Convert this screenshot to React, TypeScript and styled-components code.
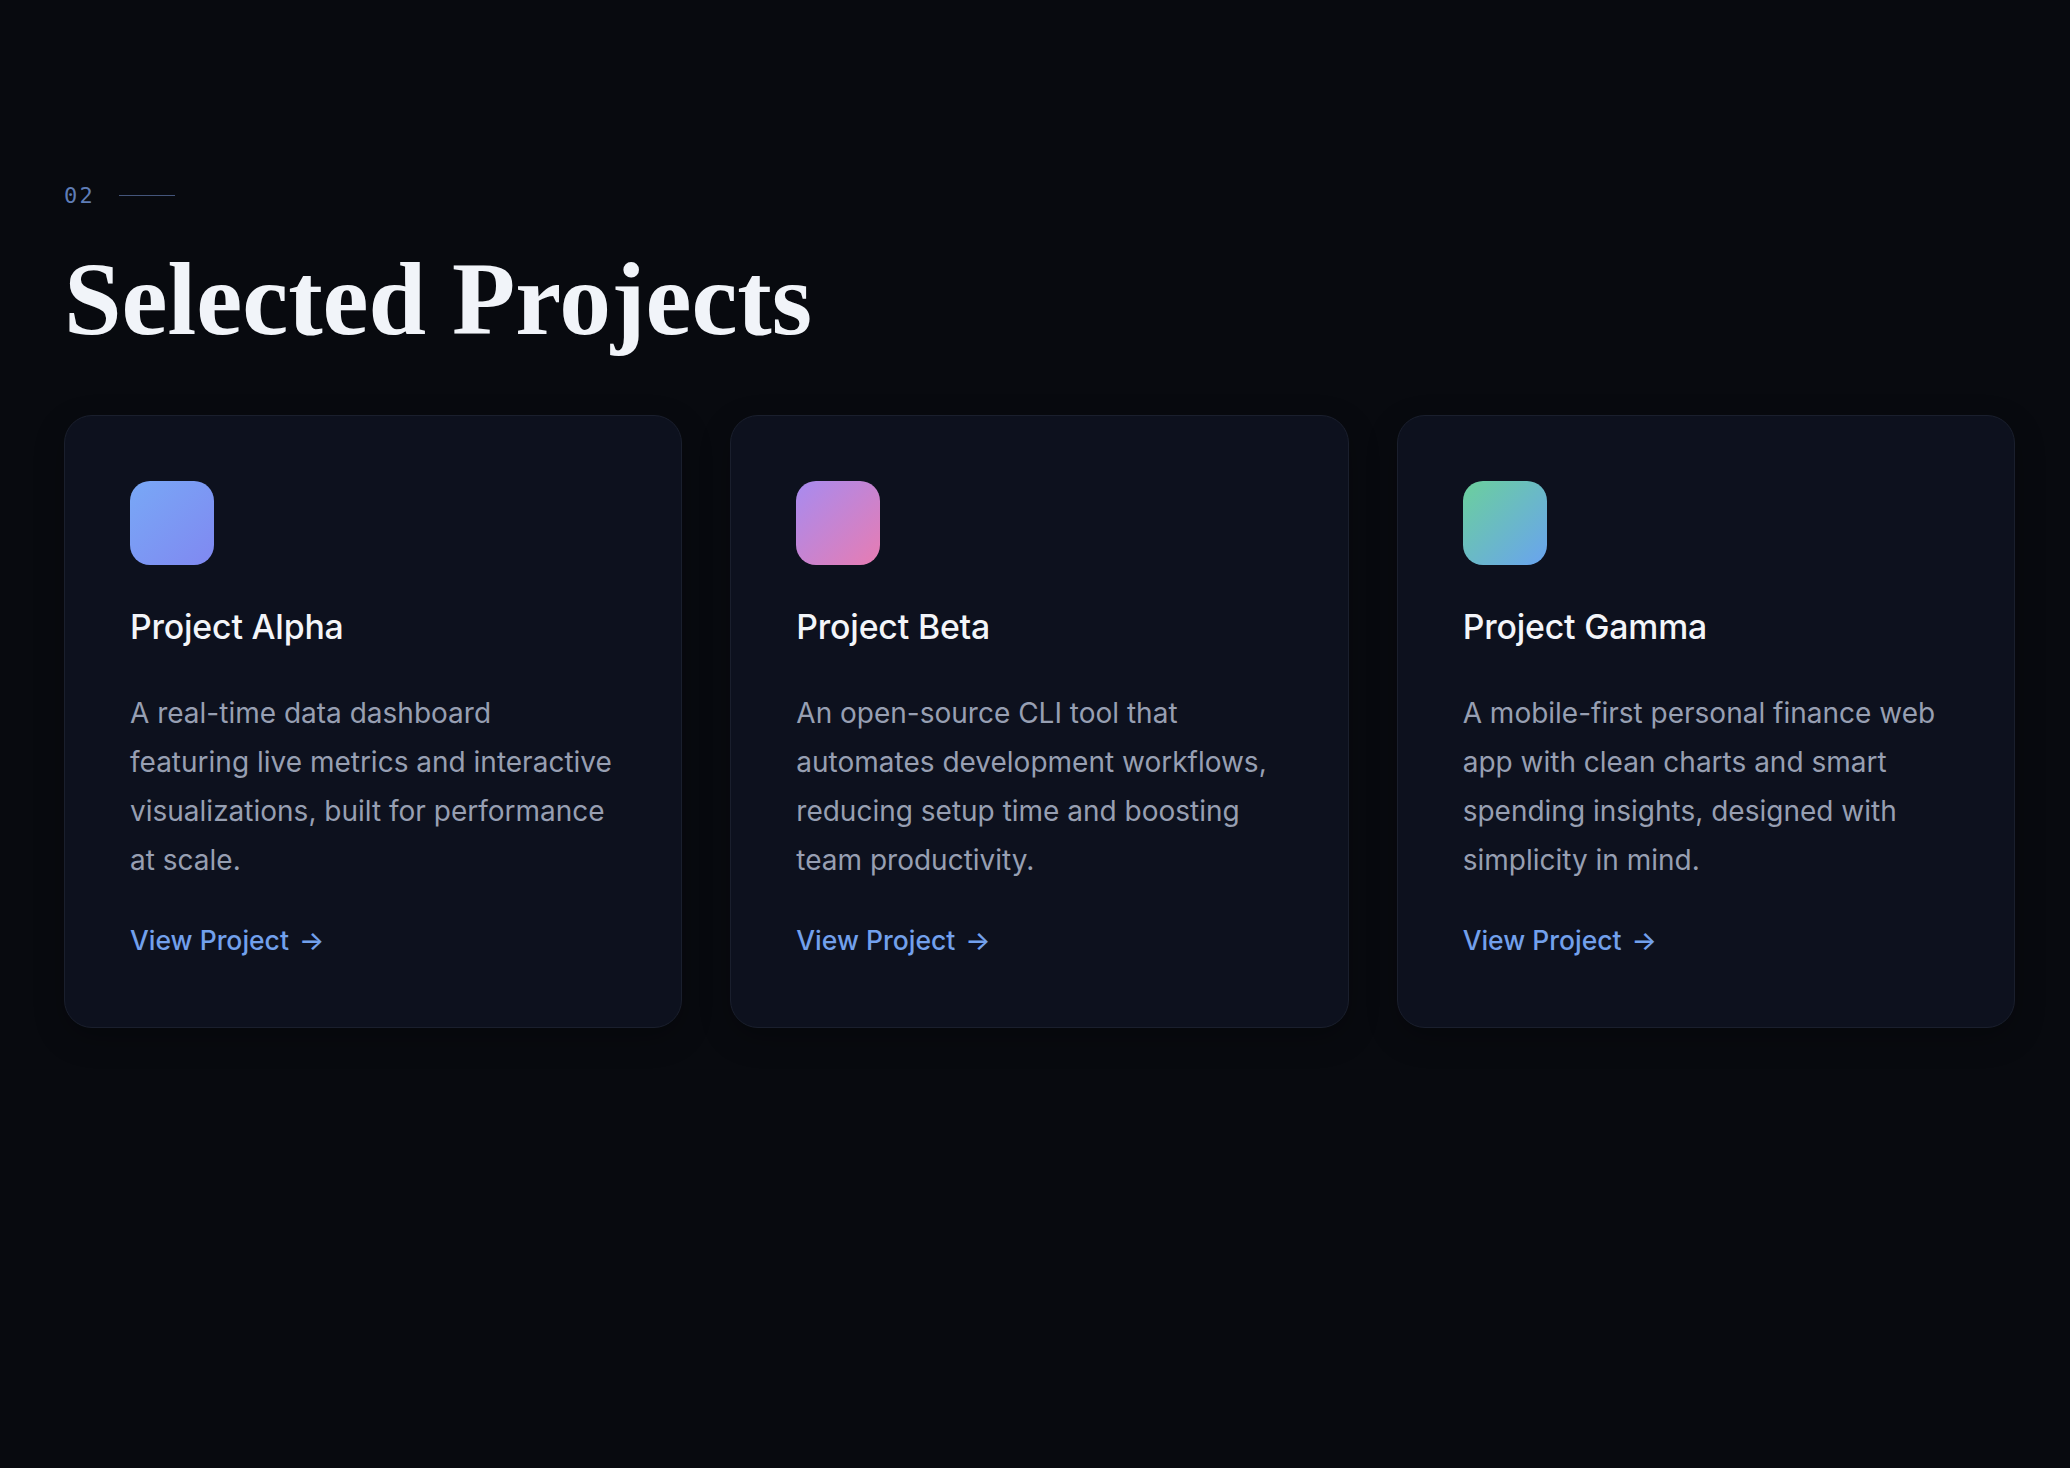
import styled, { createGlobalStyle } from 'styled-components';

interface Project {
  name: string;
  description: string;
  gradient: string;
}

const projects: Project[] = [
  {
    name: 'Project Alpha',
    description: 'A real-time data dashboard featuring live metrics and interactive visualizations, built for performance at scale.',
    gradient: 'linear-gradient(135deg, #78a8f6 0%, #8088f1 100%)',
  },
  {
    name: 'Project Beta',
    description: 'An open-source CLI tool that automates development workflows, reducing setup time and boosting team productivity.',
    gradient: 'linear-gradient(135deg, #a78bf0 0%, #e77cb2 100%)',
  },
  {
    name: 'Project Gamma',
    description: 'A mobile-first personal finance web app with clean charts and smart spending insights, designed with simplicity in mind.',
    gradient: 'linear-gradient(135deg, #6bd09c 0%, #69a3f0 100%)',
  },
];

const GlobalStyle = createGlobalStyle`
  html, body {
    margin: 0;
    padding: 0;
    background: #080a0f;
    min-height: 100%;
  }
  body {
    font-family: Inter, "Noto Sans", sans-serif;
    -webkit-font-smoothing: antialiased;
  }
  * { box-sizing: border-box; }
`;

const Page = styled.main`
  min-height: 1468px;
  background: #080a0f;
  padding: 179px 55px 0 64px;
`;

const Eyebrow = styled.div`
  display: flex;
  align-items: center;
  gap: 24px;
  height: 33px;
`;

const Index = styled.span`
  font-family: "DejaVu Sans Mono", "Liberation Mono", monospace;
  font-size: 22px;
  letter-spacing: 0.1em;
  color: #5f7db6;
`;

const Rule = styled.span`
  display: block;
  width: 56px;
  height: 1px;
  background: #44557a;
`;

const Heading = styled.h2`
  margin: 31px 0 0;
  font-family: "Liberation Serif", "Times New Roman", serif;
  font-weight: 700;
  font-size: 103.5px;
  line-height: 1.1;
  color: #f1f4f9;
`;

const Grid = styled.div`
  margin-top: 58px;
  display: grid;
  grid-template-columns: repeat(3, 1fr);
  gap: 48px;
  width: 1951px;
`;

const Card = styled.article`
  background: #0d111e;
  border: 1px solid #1a1f2d;
  border-radius: 28px;
  padding: 65px;
  display: flex;
  flex-direction: column;
  align-items: flex-start;
  box-shadow: 0 10px 30px rgba(0, 0, 0, 0.25);
`;

const Icon = styled.div<{ $gradient: string }>`
  width: 84px;
  height: 84px;
  border-radius: 20px;
  background: ${(p) => p.$gradient};
  margin-bottom: 41px;
`;

const CardTitle = styled.h3`
  margin: 0 0 41px;
  font-size: 33.8px;
  line-height: 42px;
  font-weight: 500;
  color: #f3f5f9;
  letter-spacing: -0.005em;
`;

const Description = styled.p`
  margin: 0 0 33px;
  max-width: 486px;
  font-size: 28px;
  line-height: 49px;
  color: #979fb2;
`;

const ViewLink = styled.a`
  display: inline-flex;
  align-items: center;
  gap: 10px;
  font-size: 26.5px;
  line-height: 44px;
  font-weight: 500;
  color: #72a0ec;
  text-decoration: none;
  cursor: pointer;
`;

export default function App() {
  return (
    <>
      <GlobalStyle />
      <Page>
        <Eyebrow>
          <Index>02</Index>
          <Rule />
        </Eyebrow>
        <Heading>Selected Projects</Heading>
        <Grid>
          {projects.map((project) => (
            <Card key={project.name}>
              <Icon $gradient={project.gradient} />
              <CardTitle>{project.name}</CardTitle>
              <Description>{project.description}</Description>
              <ViewLink href="#">
                View Project <span>→</span>
              </ViewLink>
            </Card>
          ))}
        </Grid>
      </Page>
    </>
  );
}
